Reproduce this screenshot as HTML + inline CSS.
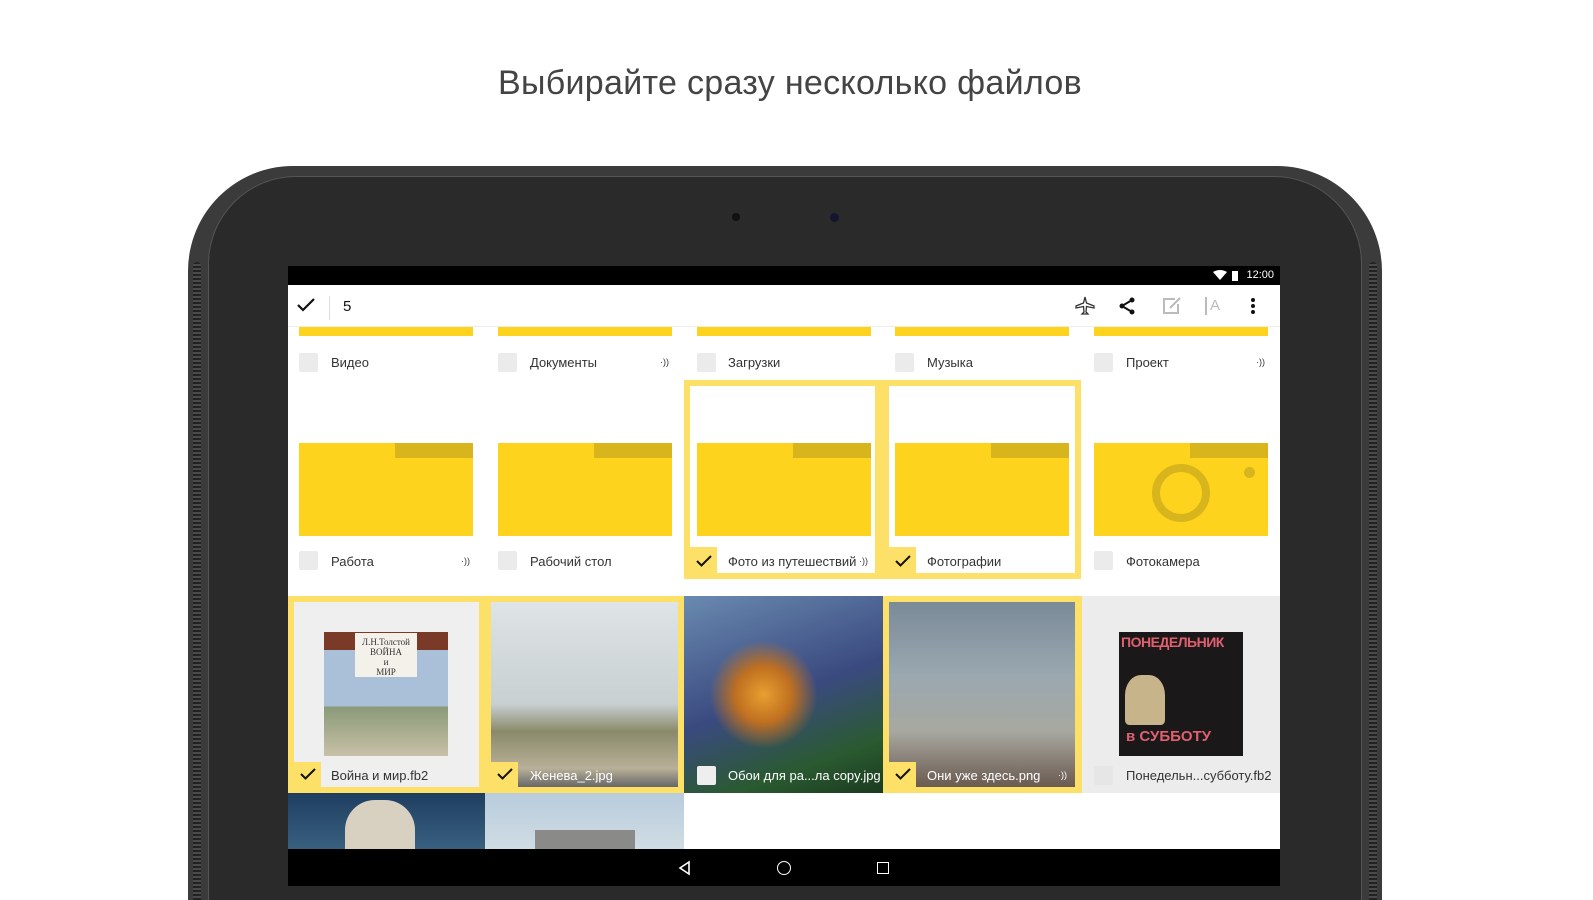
<!DOCTYPE html>
<html><head><meta charset="utf-8"><style>
*{margin:0;padding:0;box-sizing:border-box}
html,body{width:1593px;height:900px;overflow:hidden}
body{background:#fff;position:relative;font-family:"Liberation Sans","DejaVu Sans",sans-serif}
#w{position:absolute;left:0;top:0;width:1593px;height:900px;overflow:hidden}
.a{position:absolute}
h1{position:absolute;left:0;width:1580px;top:64px;text-align:center;font-weight:normal;font-size:34px;color:#444;letter-spacing:0.3px}
.lbl{position:absolute;font-size:13px;color:#333}
.cb{position:absolute;width:19px;height:19px;background:#ebebeb;border-radius:2px}
.fold{position:absolute;height:93px;width:174px;background:#fed31d}
.fold:after{content:"";position:absolute;right:0;top:0;width:78px;height:15px;background:#d8b41d}
.strip{position:absolute;top:327px;height:9px;width:174px;background:#fed31d}
.snd{position:absolute;font-size:9px;color:#333}
.chk{position:absolute;width:27px;height:28px;background:#fde068}
.chk svg{position:absolute;left:6px;top:8px}
</style></head><body><div id="w">
<h1>Выбирайте сразу несколько файлов</h1>
<!-- tablet -->
<div class="a" style="left:188px;top:166px;width:1194px;height:734px;background:#3b3b3b;border-radius:105px 105px 0 0"></div>
<div class="a" style="left:208px;top:176px;width:1154px;height:724px;background:#2a2a2a;border-radius:88px 88px 0 0;border:1px solid #555;border-bottom:none"></div>
<div class="a" style="left:193px;top:262px;width:8px;height:638px;background:repeating-linear-gradient(#222 0 2px,#4a4a4a 2px 4px);border-radius:4px 4px 0 0"></div>
<div class="a" style="left:1369px;top:262px;width:8px;height:638px;background:repeating-linear-gradient(#222 0 2px,#4a4a4a 2px 4px);border-radius:4px 4px 0 0"></div>
<div class="a" style="left:732px;top:213px;width:8px;height:8px;border-radius:50%;background:#111"></div>
<div class="a" style="left:830px;top:213px;width:9px;height:9px;border-radius:50%;background:#151530"></div>
<!-- screen -->
<div class="a" style="left:288px;top:266px;width:992px;height:620px;background:#fff;overflow:hidden">
 <div class="a" style="left:0;top:0;width:992px;height:19px;background:#000"></div>
 <div class="a" style="right:6px;top:3px;color:#fff;font-size:11px">12:00</div>
 <svg class="a" style="left:925px;top:4px" width="30" height="12"><path d="M0 2 Q7 -2 14 2 L7 10Z" fill="#fff"/><rect x="19" y="1" width="6" height="10" fill="#fff"/></svg>
 <div class="a" style="left:0;top:19px;width:992px;height:42px;background:#fff;border-bottom:1px solid #eee"></div>
 <svg class="a" style="left:9px;top:32px" width="18" height="14"><path d="M1 7 L6 12 L17 1" stroke="#111" stroke-width="2.2" fill="none"/></svg>
 <div class="a" style="left:41px;top:30px;width:1px;height:24px;background:#ddd"></div>
 <div class="a" style="left:55px;top:32px;font-size:15px;color:#111">5</div>
 <svg class="a" style="left:787px;top:30px" width="20" height="20" viewBox="0 0 20 20"><path d="M10 1 L11.5 7 L19 10 L19 12 L11.5 10.5 L11 16 L13 18 L7 18 L9 16 L8.5 10.5 L1 12 L1 10 L8.5 7Z" fill="none" stroke="#333" stroke-width="1.3"/></svg>
 <svg class="a" style="left:831px;top:31px" width="16" height="18"><circle cx="13" cy="3" r="2.5" fill="#111"/><circle cx="3" cy="9" r="2.5" fill="#111"/><circle cx="13" cy="15" r="2.5" fill="#111"/><path d="M13 3 L3 9 L13 15" stroke="#111" stroke-width="2" fill="none"/></svg>
 <svg class="a" style="left:874px;top:31px" width="20" height="18"><path d="M13 2 H2 V16 H16 V7" stroke="#bbb" stroke-width="2" fill="none"/><path d="M8 11 L18 1" stroke="#bbb" stroke-width="2"/></svg>
 <div class="a" style="left:917px;top:31px;width:2px;height:18px;background:#bbb"></div>
 <div class="a" style="left:922px;top:31px;font-size:15px;color:#bbb">A</div>
 <svg class="a" style="left:962px;top:31px" width="6" height="18"><circle cx="3" cy="3" r="2" fill="#111"/><circle cx="3" cy="9" r="2" fill="#111"/><circle cx="3" cy="15" r="2" fill="#111"/></svg>
</div>
<!-- folders row 1 -->
<div class="strip" style="left:299px"></div><div class="strip" style="left:498px"></div><div class="strip" style="left:697px"></div><div class="strip" style="left:895px"></div><div class="strip" style="left:1094px"></div>
<div class="cb" style="left:299px;top:353px"></div><div class="lbl" style="left:331px;top:355px">Видео</div>
<div class="cb" style="left:498px;top:353px"></div><div class="lbl" style="left:530px;top:355px">Документы</div><div class="snd" style="left:660px;top:357px">·))</div>
<div class="cb" style="left:697px;top:353px"></div><div class="lbl" style="left:728px;top:355px">Загрузки</div>
<div class="cb" style="left:895px;top:353px"></div><div class="lbl" style="left:927px;top:355px">Музыка</div>
<div class="cb" style="left:1094px;top:353px"></div><div class="lbl" style="left:1126px;top:355px">Проект</div><div class="snd" style="left:1256px;top:357px">·))</div>
<!-- selection frames -->
<div class="a" style="left:684px;top:380px;width:197px;height:199px;border:6px solid #fde068"></div>
<div class="a" style="left:881px;top:380px;width:200px;height:199px;border:6px solid #fde068;border-left:8px solid #fde068"></div>
<!-- row 2 -->
<div class="fold" style="left:299px;top:443px"></div>
<div class="fold" style="left:498px;top:443px"></div>
<div class="fold" style="left:697px;top:443px"></div>
<div class="fold" style="left:895px;top:443px"></div>
<div class="fold" style="left:1094px;top:443px"><div class="a" style="left:58px;top:21px;width:58px;height:58px;border-radius:50%;border:8px solid #d8b41d"></div><div class="a" style="left:150px;top:24px;width:11px;height:11px;border-radius:50%;background:#d8b41d"></div></div>
<div class="cb" style="left:299px;top:551px"></div><div class="lbl" style="left:331px;top:554px">Работа</div><div class="snd" style="left:461px;top:556px">·))</div>
<div class="cb" style="left:498px;top:551px"></div><div class="lbl" style="left:530px;top:554px">Рабочий стол</div>
<div class="chk" style="left:690px;top:547px"><svg width="16" height="12"><path d="M1 6 L5.5 10.5 L15 1" stroke="#111" stroke-width="2" fill="none"/></svg></div><div class="lbl" style="left:728px;top:554px">Фото из путешествий</div><div class="snd" style="left:859px;top:556px">·))</div>
<div class="chk" style="left:889px;top:547px"><svg width="16" height="12"><path d="M1 6 L5.5 10.5 L15 1" stroke="#111" stroke-width="2" fill="none"/></svg></div><div class="lbl" style="left:927px;top:554px">Фотографии</div>
<div class="cb" style="left:1094px;top:551px"></div><div class="lbl" style="left:1126px;top:554px">Фотокамера</div>
<!-- row 3 -->
<div class="a" style="left:288px;top:596px;width:992px;height:197px;background:#ececec"></div>
<div class="a" style="left:288px;top:596px;width:396px;height:197px;background:#fde068"></div>
<div class="a" style="left:294px;top:602px;width:185px;height:185px;background:#efefef"></div>
<div class="a" style="left:324px;top:632px;width:124px;height:124px;background:linear-gradient(#7a3a28 0 18px,#a9c0d8 18px 60%,#8a9a78 60%,#c8c0a8)"></div>
<div class="a" style="left:355px;top:633px;width:62px;height:44px;background:#f3f1ea;font-family:'Liberation Serif',serif;font-size:9px;text-align:center;color:#333;line-height:10px;padding-top:4px">Л.Н.Толстой<br>ВОЙНА<br>и<br>МИР</div>
<div class="a" style="left:491px;top:602px;width:187px;height:185px;background:linear-gradient(#dfe4e6,#c8d0d2 55%,#8a8a6a 70%,#b8b098 90%,#666)"></div>
<div class="a" style="left:684px;top:596px;width:199px;height:197px;background:radial-gradient(circle at 40% 50%,#e8a030 0,#c07020 18%,transparent 35%),linear-gradient(160deg,#6a8ab0,#3a4a80 50%,#2a5a30 80%,#1a3a20)"></div>
<div class="a" style="left:883px;top:596px;width:199px;height:197px;background:#fde068"></div>
<div class="a" style="left:889px;top:602px;width:186px;height:185px;background:linear-gradient(#7a8a98,#9aa8b0 40%,#a8a8a0 70%,#6a5a50)"></div>
<div class="a" style="left:1119px;top:632px;width:124px;height:124px;background:#1a1818"></div>
<div class="a" style="left:1121px;top:634px;font-size:14px;font-weight:bold;color:#e06070;letter-spacing:-0.5px">ПОНЕДЕЛЬНИК</div>
<div class="a" style="left:1126px;top:728px;font-size:15px;font-weight:bold;color:#e06070">в СУББОТУ</div>
<div class="a" style="left:1125px;top:675px;width:40px;height:50px;background:#c8b48a;border-radius:40% 40% 10% 10%"></div>
<div class="chk" style="left:294px;top:762px;height:25px"><svg width="16" height="12" style="top:6px"><path d="M1 6 L5.5 10.5 L15 1" stroke="#111" stroke-width="2" fill="none"/></svg></div><div class="lbl" style="left:331px;top:768px">Война и мир.fb2</div>
<div class="chk" style="left:491px;top:762px;height:25px"><svg width="16" height="12" style="top:6px"><path d="M1 6 L5.5 10.5 L15 1" stroke="#111" stroke-width="2" fill="none"/></svg></div><div class="lbl" style="left:530px;top:768px;color:#fff">Женева_2.jpg</div>
<div class="cb" style="left:697px;top:766px;background:#eee"></div><div class="lbl" style="left:728px;top:768px;color:#fff">Обои для ра...ла copy.jpg</div>
<div class="chk" style="left:889px;top:762px;height:25px"><svg width="16" height="12" style="top:6px"><path d="M1 6 L5.5 10.5 L15 1" stroke="#111" stroke-width="2" fill="none"/></svg></div><div class="lbl" style="left:927px;top:768px;color:#fff">Они уже здесь.png</div><div class="snd" style="left:1058px;top:770px;color:#fff">·))</div>
<div class="cb" style="left:1094px;top:766px;background:#e6e6e6"></div><div class="lbl" style="left:1126px;top:768px">Понедельн...субботу.fb2</div>
<!-- row 4 -->
<div class="a" style="left:288px;top:793px;width:197px;height:56px;background:linear-gradient(#1e3e60,#3a6080)"></div>
<div class="a" style="left:345px;top:800px;width:70px;height:49px;background:#d8d0c0;border-radius:30px 30px 0 0"></div>
<div class="a" style="left:485px;top:793px;width:199px;height:56px;background:linear-gradient(#b8ccdc,#d0dce4)"></div>
<div class="a" style="left:535px;top:830px;width:100px;height:19px;background:#8a8a88"></div>
<!-- nav -->
<div class="a" style="left:288px;top:849px;width:992px;height:37px;background:#000"></div>
<svg class="a" style="left:677px;top:860px" width="16" height="16"><path d="M12 2 L3 8 L12 14Z" stroke="#fff" stroke-width="1.6" fill="none"/></svg>
<div class="a" style="left:777px;top:861px;width:14px;height:14px;border:1.6px solid #fff;border-radius:50%"></div>
<div class="a" style="left:877px;top:862px;width:12px;height:12px;border:1.6px solid #fff"></div>
</div></body></html>
